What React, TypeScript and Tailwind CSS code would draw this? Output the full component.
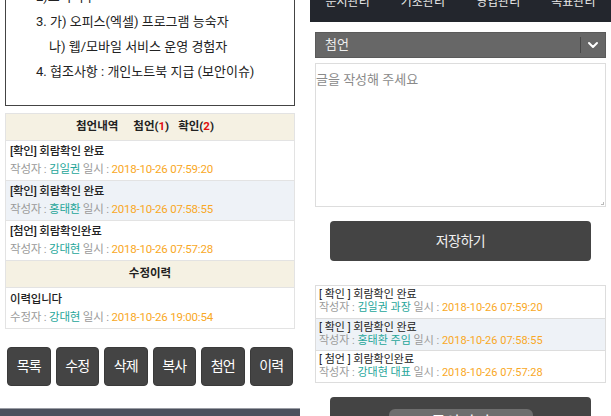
import { ChevronDown } from "lucide-react";

const font = { fontFamily: '"Roboto", "Noto Sans CJK KR", sans-serif' };

const notes = [
  { tag: "확인", title: "회람확인 완료", name: "김일권", rank: "과장", date: "2018-10-26 07:59:20" },
  { tag: "확인", title: "회람확인 완료", name: "홍태환", rank: "주임", date: "2018-10-26 07:58:55" },
  { tag: "첨언", title: "회람확인완료", name: "강대현", rank: "대표", date: "2018-10-26 07:57:28" },
];

function Meta({ label, name, date }: { label: string; name: string; date: string }) {
  return (
    <div className="text-[#9a9a9a]">
      {label} : <span className="text-[#26a69a]">{name}</span> 일시 :{" "}
      <span className="text-[#f9a825]">{date}</span>
    </div>
  );
}

function LeftPane() {
  return (
    <div className="w-[300px] shrink-0">
      <div className="mx-[5px] -mt-[27px] h-[133px] border border-[#444] pt-[10px] pl-[30px] text-[13px] text-[#222]">
        <div className="h-[25px] leading-[25px]">2)교육이수</div>
        <div className="h-[25px] leading-[25px]">3. 가) 오피스(엑셀) 프로그램 능숙자</div>
        <div className="h-[25px] leading-[25px] pl-[13px]">나) 웹/모바일 서비스 운영 경험자</div>
        <div className="h-[25px] leading-[25px]">4. 협조사항 : 개인노트북 지급 (보안이슈)</div>
      </div>

      <div className="mx-[5px] mt-[7px] border border-[#e3e3e3] text-[11.5px]">
        <div className="h-[26px] bg-[#f5f1e3] flex items-center justify-center pr-[10px] font-bold text-[#222]">
          <span className="mr-[15px]">첨언내역</span>
          <span className="mr-[9px]">
            첨언(<span className="text-[#e01010]">1</span>)
          </span>
          <span>
            확인(<span className="text-[#e01010]">2</span>)
          </span>
        </div>
        {notes.map((n, i) => (
          <div
            key={i}
            className={`h-[40px] border-t border-[#e3e3e3] px-[4px] pt-[1px] leading-[18px] tracking-[-0.2px] ${i === 1 ? "bg-[#eef2f7]" : "bg-white"}`}
          >
            <div className="text-[#222] font-medium">
              [{n.tag}] {n.title}
            </div>
            <Meta label="작성자" name={n.name} date={n.date} />
          </div>
        ))}
        <div className="h-[27px] border-t border-[#e3e3e3] bg-[#f5f1e3] flex items-center justify-center font-bold text-[#222]">
          수정이력
        </div>
        <div className="h-[41px] border-t border-[#e3e3e3] px-[4px] pt-[2px] leading-[18px] tracking-[-0.2px]">
          <div className="text-[#222] font-medium">이력입니다</div>
          <Meta label="수정자" name="강대현" date="2018-10-26 19:00:54" />
        </div>
      </div>

      <div className="mx-[7px] mt-[18px] flex gap-[5px]">
        {["목록", "수정", "삭제", "복사", "첨언", "이력"].map((b) => (
          <button
            key={b}
            className="flex-1 h-[39px] rounded-[4px] bg-[#444] border border-[#3a3a3a] text-[14px] tracking-[-1px] text-white"
          >
            {b}
          </button>
        ))}
      </div>

      <div className="mt-[22px] h-[12px] bg-[#4b505d] border-t border-[#9a9da5]" />
    </div>
  );
}

function RightPane() {
  return (
    <div className="w-[301px] ml-[10px] shrink-0">
      <div className="-mt-[18px] h-[40px] bg-[#23262d] grid grid-cols-4 items-center text-[12px] text-[#e8e8e8] text-center">
        <span>문서관리</span>
        <span>기초관리</span>
        <span>영업관리</span>
        <span>목표관리</span>
      </div>

      <div className="px-[5px]">
        <div className="mt-[10px] h-[26px] bg-[#676767] border border-[#5a5a5a] flex items-center pl-[9px] text-[13px] text-[#eee]">
          <span className="flex-1">첨언</span>
          <span className="w-px h-[16px] bg-[#484848]" />
          <span className="w-[24px] flex justify-center">
            <ChevronDown className="w-[16px] h-[16px] text-white" strokeWidth={3} />
          </span>
        </div>

        <div className="mt-[5px] h-[144px] border border-[#ddd] relative">
          <div className="pt-[7px] text-[13px] leading-[18px] text-[#8a8a8a]">글을 작성해 주세요</div>
          <span className="absolute right-[1px] bottom-[1px] w-[3px] h-[3px] border-r border-b border-[#bbb]" />
        </div>

        <button className="block mt-[14px] mx-[15px] w-[261px] h-[40px] rounded-[4px] bg-[#444] text-[14px] tracking-[-0.5px] text-[#f0f0f0]">
          저장하기
        </button>

        <div className="mt-[24px] border border-[#ddd] text-[11px]">
          {notes.map((n, i) => (
            <div
              key={i}
              className={`h-[32px] px-[3px] pt-[2px] leading-[13px] ${i > 0 ? "border-t border-[#ddd]" : ""} ${i === 1 ? "bg-[#eef2f7]" : "bg-white"}`}
            >
              <div className="text-[#222]">
                [ {n.tag} ] {n.title}
              </div>
              <Meta label="작성자" name={`${n.name} ${n.rank}`} date={n.date} />
            </div>
          ))}
        </div>

        <div className="mt-[14px] mx-[15px] h-[40px] rounded-t-[4px] bg-[#444] flex justify-center pt-[12px]">
          <span className="w-[144px] h-[28px] rounded-[6px] bg-[#6e6e6e] text-center text-[16px] leading-[28px] text-white">
            돌아가기
          </span>
        </div>
      </div>
    </div>
  );
}

export default function App() {
  return (
    <div className="w-[611px] h-[416px] overflow-hidden bg-white flex items-start" style={font}>
      <LeftPane />
      <RightPane />
    </div>
  );
}
